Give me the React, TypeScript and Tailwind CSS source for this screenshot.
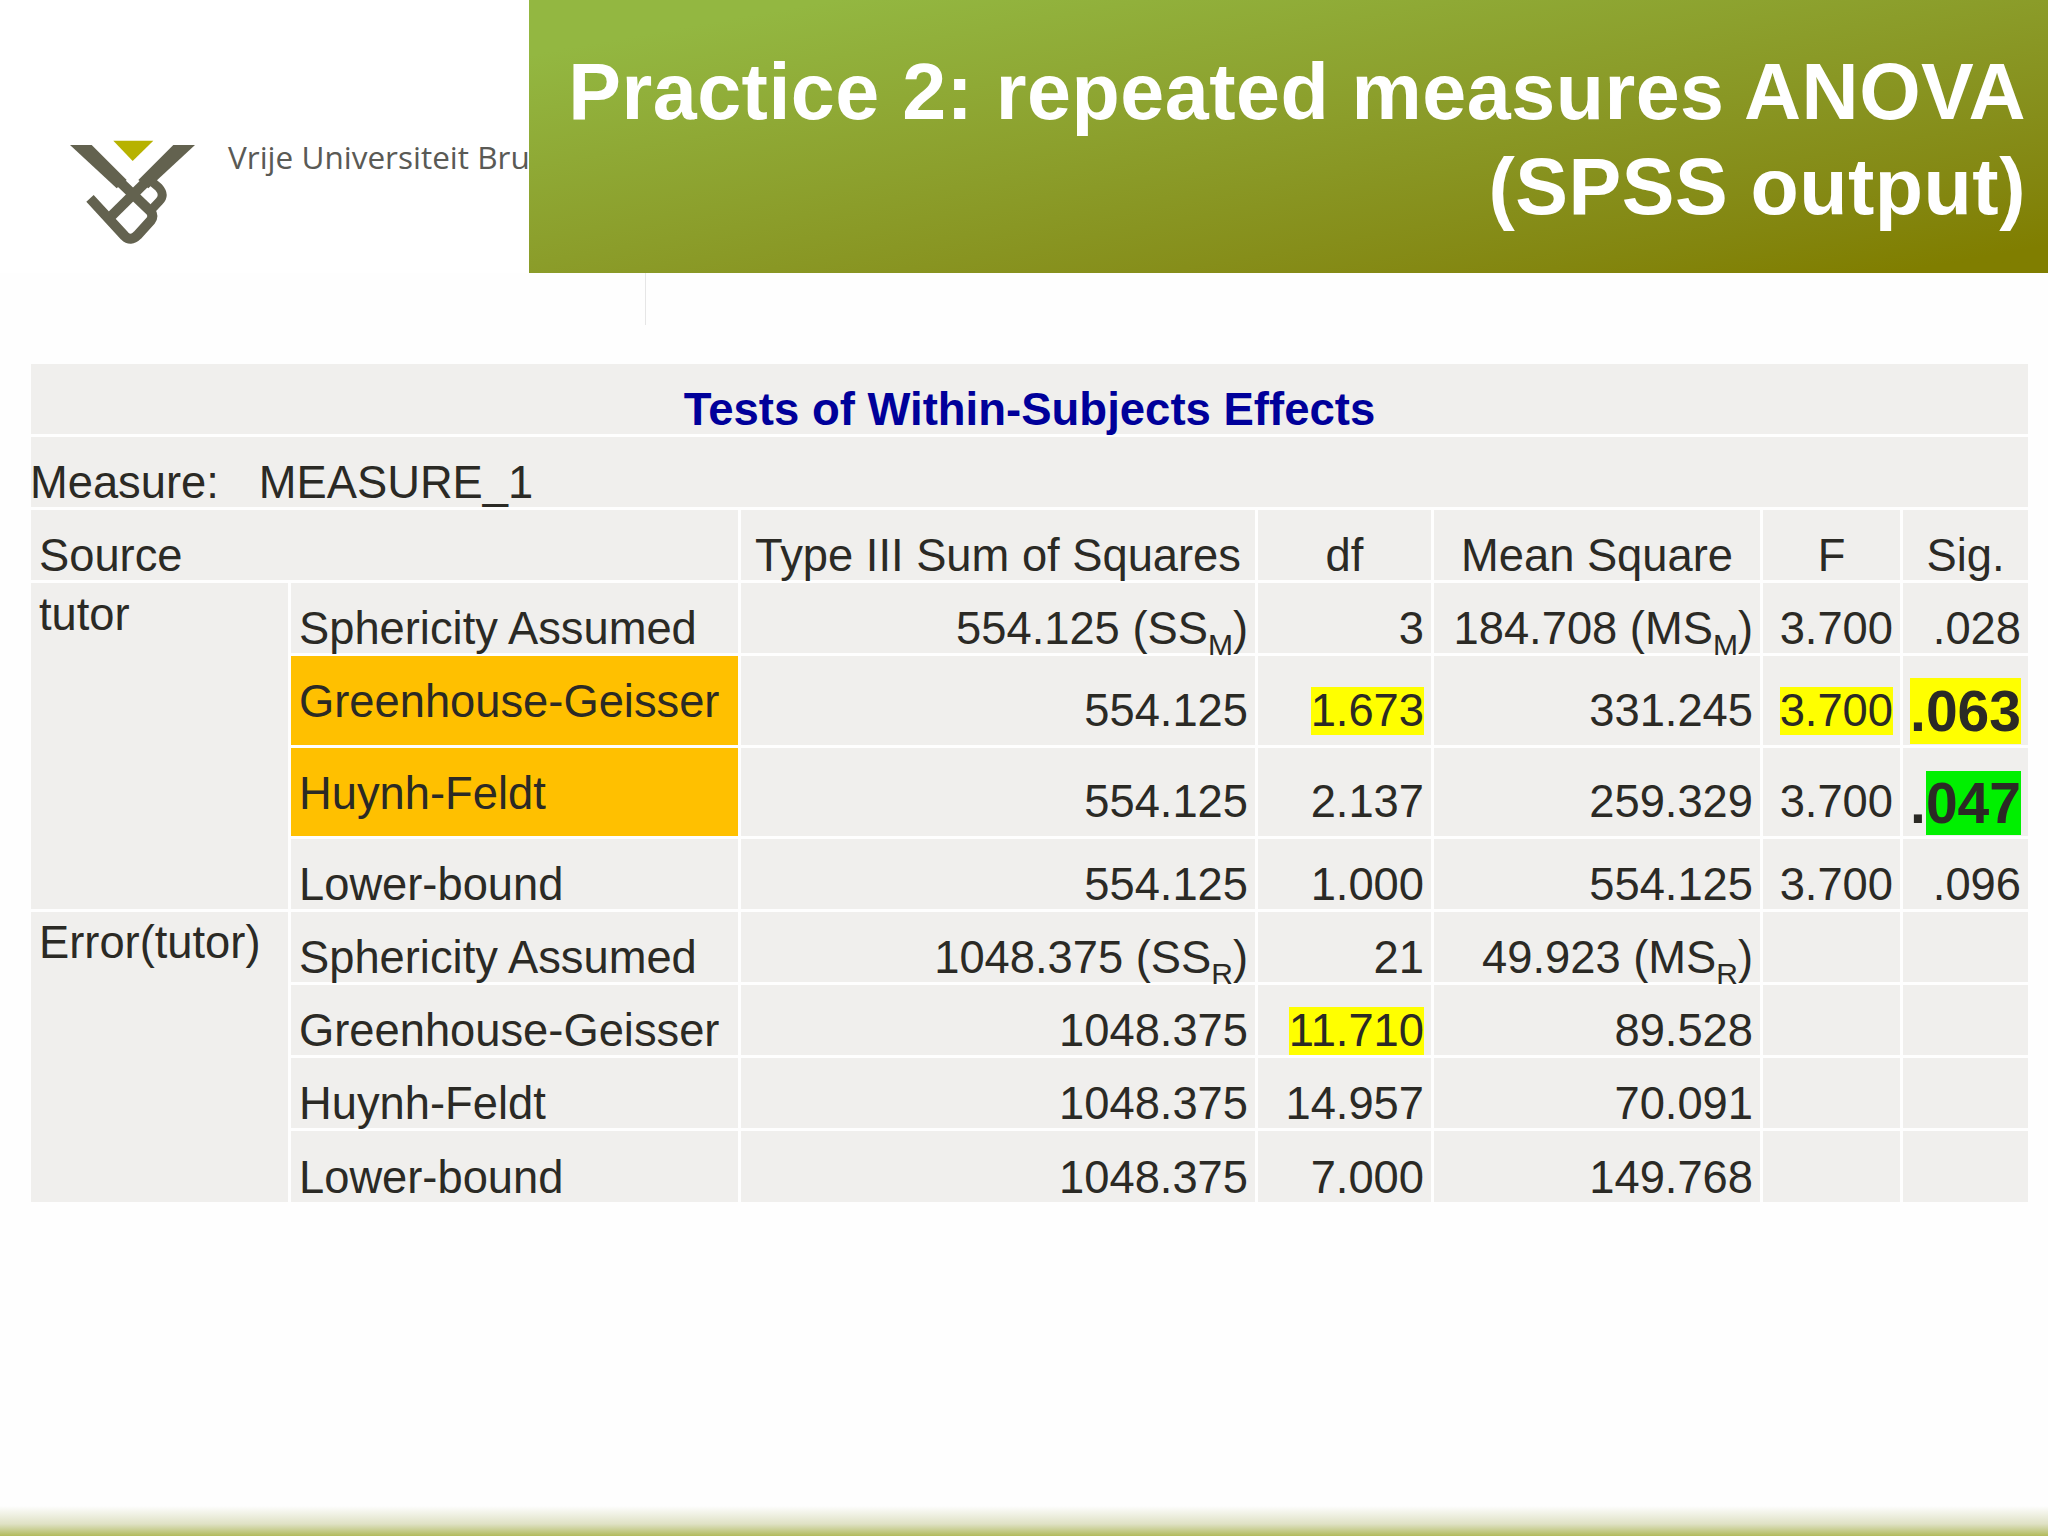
import React from "react";

const cellBg = "bg-[#f0efed]";
const num = "flex items-end justify-end pr-[7px] bg-[#f0efed]";
const numTall = "flex items-end justify-end pr-[7px] pb-[10px] bg-[#f0efed]";
const sub = "text-[30px] align-baseline -bottom-[11px]";
const label = "flex items-end pl-[8px] bg-[#f0efed]";
const head = "flex items-end justify-center bg-[#f0efed]";

function Logo() {
  return (
    <svg viewBox="0 0 450 360" className="w-[150px] h-[120px] shrink-0">
      <defs>
        <clipPath id="logoClip">
          <rect x="0" y="45" width="450" height="315" />
        </clipPath>
      </defs>
      <polygon points="160,32 280,32 218,93" fill="#b7b200" />
      <polygon points="30,45 95,45 200,150 170,175" fill="#63624f" />
      <polygon points="405,45 340,45 235,150 265,175" fill="#63624f" />
      <g clipPath="url(#logoClip)" fill="none" stroke="#63624f" strokeWidth="30" strokeLinejoin="round">
        <path d="M398,17 L150,262" />
        <path d="M90,205 L194,318 Q212,336 232,316 L272,272 Q282,258 272,244 L35,17" />
        <path d="M272,152 L296,172 Q316,195 298,214 L262,252" strokeWidth="26" />
      </g>
    </svg>
  );
}

export default function App() {
  return (
    <div className="relative h-[1536px] w-[2048px] overflow-hidden flex flex-col bg-[#fefefe] font-['Liberation_Sans',Arial,sans-serif] text-[#2b2a25]">
      <header className="flex h-[273px] shrink-0">
        <div className="w-[529px] shrink-0 overflow-hidden bg-white flex items-start pl-[60px] pt-[130px]">
          <Logo />
          <span className="ml-[18px] mt-[5px] whitespace-nowrap font-['Open_Sans',sans-serif] text-[31.5px] leading-[normal] text-[#5a5a55]">
            Vrije Universiteit Bru
          </span>
        </div>
        <div className="flex-1 bg-linear-to-br from-[#93b741] from-10% to-[#807e00] to-95% text-right text-white font-bold text-[79px] tracking-[0.5px] leading-[95px] pt-[44px] pr-[22px]">
          <div className="whitespace-nowrap">Practice 2: repeated measures ANOVA</div>
          <div>(SPSS output)</div>
        </div>
      </header>

      <div className="ml-[645px] h-[52px] w-px shrink-0 bg-[#e6e6e6]" />

      <main className="ml-[31px] mt-[39px] grid w-[1997px] shrink-0 grid-cols-[257px_447px_514px_173px_326px_137px_125px] grid-rows-[70px_70px_70px_70px_89px_88px_70px_70px_70px_70px_71px] gap-[3px] text-[45.3px] leading-[48px]">
        <div className={`col-span-7 flex items-end justify-center ${cellBg} font-bold text-[45.5px] text-[#00009a]`}>
          Tests of Within-Subjects Effects
        </div>
        <div className={`col-span-7 flex items-end ${cellBg}`}>
          <span className="-ml-[1px]">Measure:</span>
          <span className="ml-[40px]">MEASURE_1</span>
        </div>

        <div className={`col-span-2 ${label}`}>Source</div>
        <div className={head}>Type III Sum of Squares</div>
        <div className={head}>df</div>
        <div className={head}>Mean Square</div>
        <div className={head}>F</div>
        <div className={head}>Sig.</div>

        <div className={`row-span-4 pl-[8px] pt-[8px] ${cellBg}`}>tutor</div>
        <div className={label}>Sphericity Assumed</div>
        <div className={num}>
          <span>554.125 (SS<sub className={sub}>M</sub>)</span>
        </div>
        <div className={num}>3</div>
        <div className={num}>
          <span>184.708 (MS<sub className={sub}>M</sub>)</span>
        </div>
        <div className={num}>3.700</div>
        <div className={num}>.028</div>

        <div className="flex items-end bg-[#ffc000] pl-[8px] pb-[19px]">Greenhouse-Geisser</div>
        <div className={numTall}>554.125</div>
        <div className={numTall}>
          <span className="bg-[#ffff00]">1.673</span>
        </div>
        <div className={numTall}>331.245</div>
        <div className={numTall}>
          <span className="bg-[#ffff00]">3.700</span>
        </div>
        <div className="flex items-end justify-end bg-[#f0efed] pr-[7px] pb-[1px] text-[57px] leading-[normal] font-bold">
          <span className="bg-[#ffff00]">.063</span>
        </div>

        <div className="flex items-end bg-[#ffc000] pl-[8px] pb-[18px]">Huynh-Feldt</div>
        <div className={numTall}>554.125</div>
        <div className={numTall}>2.137</div>
        <div className={numTall}>259.329</div>
        <div className={numTall}>3.700</div>
        <div className="flex items-end justify-end bg-[#f0efed] pr-[7px] text-[57px] leading-[normal] font-bold">
          <span>
            .<span className="bg-[#00f000]">047</span>
          </span>
        </div>

        <div className={label}>Lower-bound</div>
        <div className={num}>554.125</div>
        <div className={num}>1.000</div>
        <div className={num}>554.125</div>
        <div className={num}>3.700</div>
        <div className={num}>.096</div>

        <div className={`row-span-4 pl-[8px] pt-[7px] ${cellBg}`}>Error(tutor)</div>
        <div className={label}>Sphericity Assumed</div>
        <div className={num}>
          <span>1048.375 (SS<sub className={sub}>R</sub>)</span>
        </div>
        <div className={num}>21</div>
        <div className={num}>
          <span>49.923 (MS<sub className={sub}>R</sub>)</span>
        </div>
        <div className={cellBg} />
        <div className={cellBg} />

        <div className={label}>Greenhouse-Geisser</div>
        <div className={num}>1048.375</div>
        <div className={num}>
          <span className="bg-[#ffff00]">11.710</span>
        </div>
        <div className={num}>89.528</div>
        <div className={cellBg} />
        <div className={cellBg} />

        <div className={label}>Huynh-Feldt</div>
        <div className={num}>1048.375</div>
        <div className={num}>14.957</div>
        <div className={num}>70.091</div>
        <div className={cellBg} />
        <div className={cellBg} />

        <div className={label}>Lower-bound</div>
        <div className={num}>1048.375</div>
        <div className={num}>7.000</div>
        <div className={num}>149.768</div>
        <div className={cellBg} />
        <div className={cellBg} />
      </main>

      <footer className="mt-auto h-[30px] shrink-0 bg-linear-to-b from-[#fefefe] via-[#dfe1c4] via-60% to-[#b2ba5a]" />
    </div>
  );
}
